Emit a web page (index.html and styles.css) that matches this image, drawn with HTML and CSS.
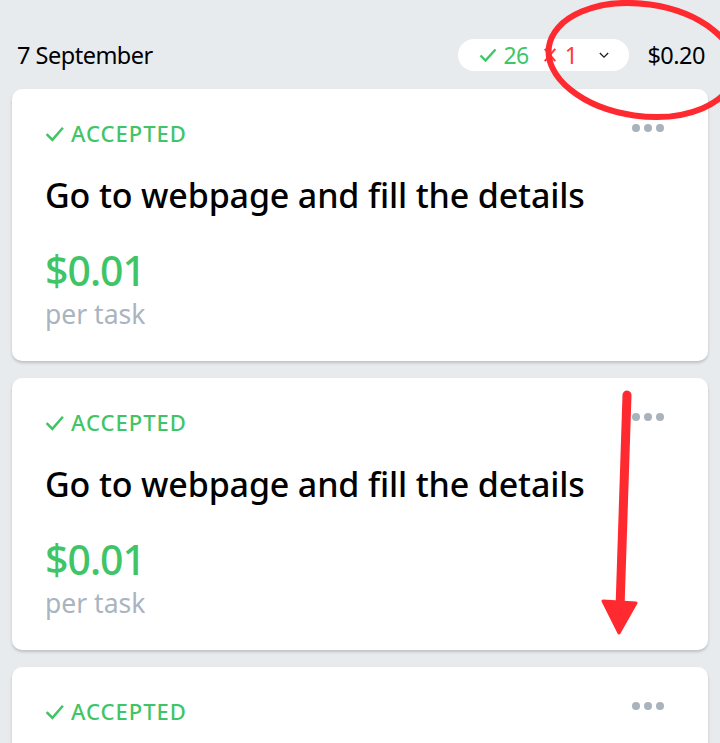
FILE: index.html
```html
<!DOCTYPE html>
<html>
<head>
<meta charset="utf-8">
<link rel="stylesheet" href="styles.css">
</head>
<body>
<div class="page">
  <header class="day-header">
    <div class="date">7 September</div>
    <div class="summary">
      <div class="pill">
        <span class="ok"><svg class="ico" viewBox="0 0 20 20" width="20" height="20"><path d="M2.5 10.5 L7.5 15.5 L17.5 4.5" fill="none" stroke="currentColor" stroke-width="2.4"/></svg>26</span>
        <span class="bad"><svg class="ico" viewBox="0 0 16 20" width="14" height="18"><path d="M2 3 L14 17 M14 3 L2 17" fill="none" stroke="currentColor" stroke-width="2.4"/></svg>1</span>
        <svg class="chev" viewBox="0 0 12 8" width="10" height="7"><path d="M1 1 L6 6 L11 1" fill="none" stroke="#222" stroke-width="1.6"/></svg>
      </div>
      <div class="total">$0.20</div>
    </div>
  </header>

  <div class="cards">
    <article class="card">
      <div class="card-top">
        <div class="status"><svg viewBox="0 0 20 20" width="21" height="21"><path d="M2.5 10.5 L8 16 L18 4.5" fill="none" stroke="currentColor" stroke-width="2.4"/></svg>ACCEPTED</div>
        <div class="more"><i></i><i></i><i></i></div>
      </div>
      <h2 class="title">Go to webpage and fill the details</h2>
      <div class="price">$0.01</div>
      <div class="per">per task</div>
    </article>
    <article class="card">
      <div class="card-top">
        <div class="status"><svg viewBox="0 0 20 20" width="21" height="21"><path d="M2.5 10.5 L8 16 L18 4.5" fill="none" stroke="currentColor" stroke-width="2.4"/></svg>ACCEPTED</div>
        <div class="more"><i></i><i></i><i></i></div>
      </div>
      <h2 class="title">Go to webpage and fill the details</h2>
      <div class="price">$0.01</div>
      <div class="per">per task</div>
    </article>
    <article class="card">
      <div class="card-top">
        <div class="status"><svg viewBox="0 0 20 20" width="21" height="21"><path d="M2.5 10.5 L8 16 L18 4.5" fill="none" stroke="currentColor" stroke-width="2.4"/></svg>ACCEPTED</div>
        <div class="more"><i></i><i></i><i></i></div>
      </div>
      <h2 class="title">Go to webpage and fill the details</h2>
      <div class="price">$0.01</div>
      <div class="per">per task</div>
    </article>
  </div>

  <svg class="annot" viewBox="0 0 720 743" width="720" height="743">
    <ellipse cx="642" cy="60" rx="94" ry="56" transform="rotate(8 642 60)" fill="none" stroke="#ff2a2f" stroke-width="6"/>
    <path d="M627 395 L620 608" stroke="#ff2a2f" stroke-width="9" stroke-linecap="round" fill="none"/>
    <path d="M603 601 L636 603 L619 633 Z" fill="#ff2a2f" stroke="#ff2a2f" stroke-width="3" stroke-linejoin="round"/>
  </svg>
</div>
</body>
</html>
```

FILE: styles.css
```css
* { box-sizing: border-box; }
html, body { margin: 0; padding: 0; }
body {
  background: #e8ebee;
  font-family: "Noto Sans", "Open Sans", sans-serif;
  color: #000;
  width: 720px;
  height: 743px;
  overflow: hidden;
}
.page { position: relative; width: 720px; height: 743px; overflow: hidden; }
.day-header {
  display: flex;
  align-items: flex-start;
  justify-content: space-between;
  padding: 39px 15px 0 17px;
  height: 89px;
}
.date {
  font-size: 23.5px;
  line-height: 32px;
  letter-spacing: -0.5px;
}
.summary { display: flex; align-items: center; gap: 18px; }
.pill {
  background: #fff;
  border-radius: 16px;
  height: 32px;
  width: 171px;
  display: flex;
  align-items: center;
  padding: 0 20px 0 20px;
  font-size: 23px;
  letter-spacing: -0.5px;
}
.pill .ok { color: #3fc567; display: flex; align-items: center; gap: 5px; }
.pill .bad { color: #ff3b3b; display: flex; align-items: center; gap: 8px; margin-left: 14px; }
.chev { margin-left: auto; }
.total { font-size: 23.5px; letter-spacing: -0.5px; line-height: 32px; }
.cards {
  display: flex;
  flex-direction: column;
  gap: 17px;
  padding: 0 12px;
}
.card {
  background: #fff;
  border-radius: 10px;
  height: 272px;
  flex-shrink: 0;
  box-shadow: 0 2px 3px rgba(0,0,0,0.18);
  padding: 30px 32px 0 32px;
}
.card-top { display: flex; justify-content: space-between; align-items: center; height: 28px; }
.status {
  color: #3fc567;
  font-size: 22px;
  font-weight: 500;
  letter-spacing: 1px;
  display: flex;
  align-items: center;
  gap: 6px;
}
.more { display: flex; gap: 4px; margin-top: -10px; margin-right: 12px; }
.more i { width: 8px; height: 8px; border-radius: 50%; background: #a9b3bc; display: block; }
.title {
  margin: 0;
  font-size: 34px;
  font-weight: 500;
  letter-spacing: -0.15px;
  line-height: 44px;
  margin-top: 26px;
  padding-left: 1px;
}
.price {
  color: #3fc567;
  font-size: 41px;
  font-weight: 500;
  line-height: 48px;
  margin-top: 29px;
  letter-spacing: -1px;
  padding-left: 1px;
}
.per {
  color: #a9b4bf;
  font-size: 26.5px;
  line-height: 34px;
  margin-top: 3px;
  padding-left: 1px;
}
.annot { position: absolute; left: 0; top: 0; pointer-events: none; }
```
